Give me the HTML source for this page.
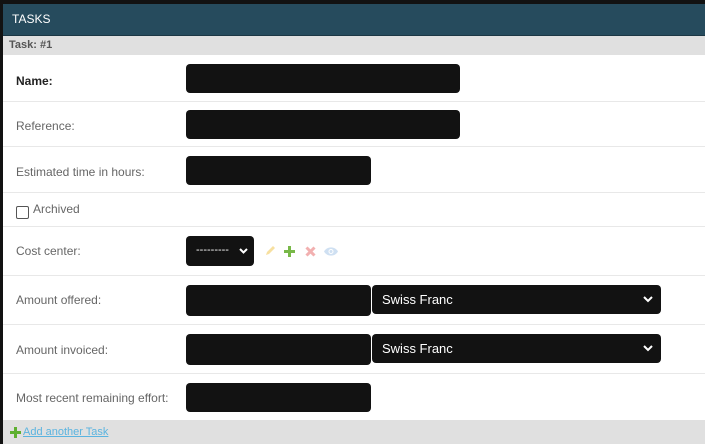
<!DOCTYPE html><html><head><style>
body{margin:0;width:705px;height:444px;background:#121212;font-family:"Liberation Sans",sans-serif;overflow:hidden;position:relative}
.w{position:absolute;left:3px;top:4px;right:0;bottom:0;background:#fff}
.h{position:absolute;left:0;top:0;right:0;height:31px;background:#264b5d;color:#fff;font-size:12px;line-height:31px;padding-left:9px;border-bottom:1px solid #1c3744}
.s{position:absolute;left:0;top:32px;right:0;height:19px;background:#e0e0e0;color:#555;font-size:11px;font-weight:bold;line-height:19px;padding-left:6px}
.r{position:absolute;left:0;right:0;border-bottom:1px solid #e8e8e8}
.l{position:absolute;left:13px;font-size:12px;color:#666}
.b{position:absolute;background:#121212;border-radius:4px}
.sel{position:absolute;background:#121212;border-radius:4px;color:#fff;font-size:13px;line-height:29px;padding-left:10px;box-sizing:border-box}
.sel svg{position:absolute;right:8px;top:11px}
.f{position:absolute;left:0;right:0;top:416px;height:24px;background:#e0e0e0;font-size:11px}
</style></head><body><div class="w">
<div class="h">TASKS</div>
<div class="s">Task: #1</div>
<div class="r" style="top:52px;height:45px"></div>
<div class="l" style="top:70px;color:#222;font-weight:bold">Name:</div>
<div class="b" style="left:183px;top:60px;width:274px;height:29px"></div>
<div class="r" style="top:97px;height:45px"></div>
<div class="l" style="top:115px">Reference:</div>
<div class="b" style="left:183px;top:106px;width:274px;height:29px"></div>
<div class="r" style="top:143px;height:45px"></div>
<div class="l" style="top:161px">Estimated time in hours:</div>
<div class="b" style="left:183px;top:152px;width:185px;height:29px"></div>
<div class="r" style="top:189px;height:33px"></div>
<div style="position:absolute;left:13px;top:202px;width:11px;height:11px;border:1px solid #555;border-radius:2px"></div>
<div class="l" style="left:30px;top:198px">Archived</div>
<div class="r" style="top:223px;height:48px"></div>
<div class="l" style="top:240px">Cost center:</div>
<div class="sel" style="left:183px;top:232px;width:68px;height:30px;font-size:11px">---------<svg width="9" height="6" viewBox="0 0 9 6" style="top:12px;right:6px"><path d="M1 1l3.5 3.5L8 1" stroke="#fff" stroke-width="2" fill="none"/></svg></div>
<svg style="position:absolute;left:261px;top:241px" width="12" height="12" viewBox="0 0 12 12"><path d="M2 10l1-3 6-6 2 2-6 6z" fill="#f7e0a0"/></svg>
<svg style="position:absolute;left:281px;top:242px" width="11" height="11" viewBox="0 0 11 11"><path d="M4 0h3v4h4v3H7v4H4V7H0V4h4z" fill="#78b848"/></svg>
<svg style="position:absolute;left:302px;top:242px" width="11" height="11" viewBox="0 0 11 11"><path d="M1.5 1.5l8 8M9.5 1.5l-8 8" stroke="#f2b0b0" stroke-width="3"/></svg>
<svg style="position:absolute;left:321px;top:243px" width="14" height="9" viewBox="0 0 14 9"><path d="M0 4.5C3 -1 11 -1 14 4.5 11 10 3 10 0 4.5z" fill="#cfe0f2"/><circle cx="7" cy="4.5" r="2.5" fill="#fff"/><circle cx="7" cy="4.5" r="1.5" fill="#cfe0f2"/></svg>
<div class="r" style="top:272px;height:48px"></div>
<div class="l" style="top:289px">Amount offered:</div>
<div class="b" style="left:183px;top:281px;width:185px;height:31px"></div>
<div class="sel" style="left:369px;top:281px;width:289px;height:29px">Swiss Franc<svg width="10" height="7" viewBox="0 0 10 7"><path d="M1 1l4 4 4-4" stroke="#fff" stroke-width="2" fill="none"/></svg></div>
<div class="r" style="top:321px;height:48px"></div>
<div class="l" style="top:339px">Amount invoiced:</div>
<div class="b" style="left:183px;top:330px;width:185px;height:31px"></div>
<div class="sel" style="left:369px;top:330px;width:289px;height:29px">Swiss Franc<svg width="10" height="7" viewBox="0 0 10 7"><path d="M1 1l4 4 4-4" stroke="#fff" stroke-width="2" fill="none"/></svg></div>
<div class="l" style="top:387px">Most recent remaining effort:</div>
<div class="b" style="left:183px;top:379px;width:185px;height:29px"></div>
<div class="f"><svg style="position:absolute;left:7px;top:7px" width="11" height="11" viewBox="0 0 11 11"><path d="M4 0h3v4h4v3H7v4H4V7H0V4h4z" fill="#5eb030"/></svg><span style="position:absolute;left:20px;top:6px;color:#5bb4e0;text-decoration:underline">Add another Task</span></div>
</div></body></html>
